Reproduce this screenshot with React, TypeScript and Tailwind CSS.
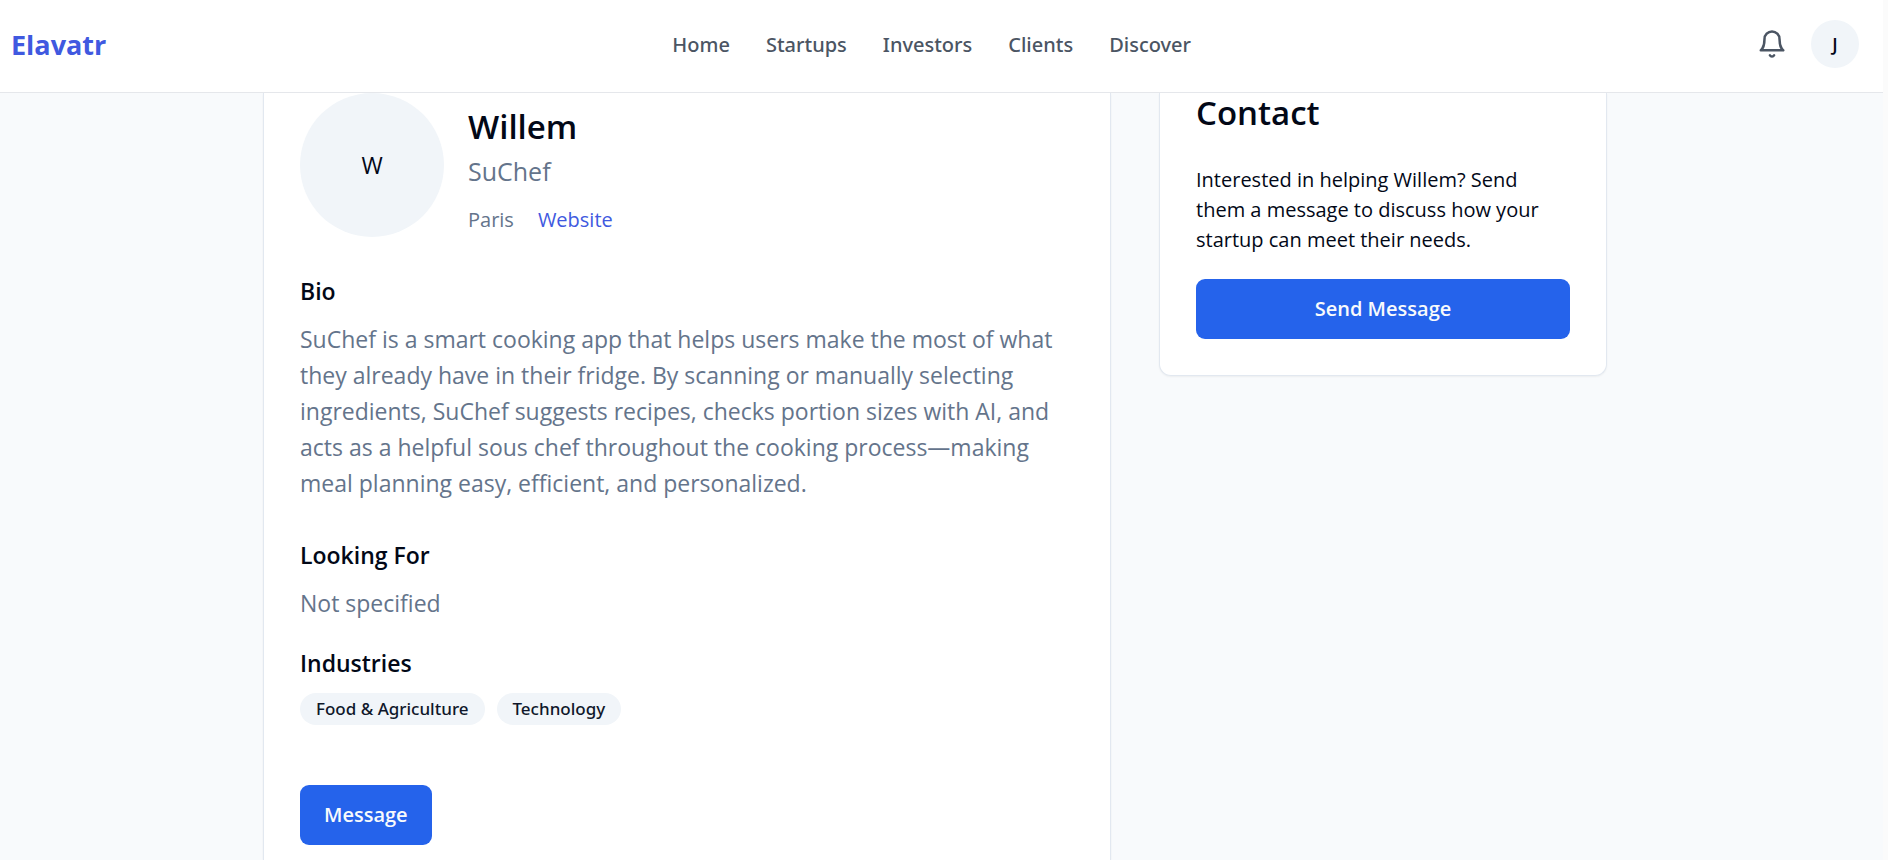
import React from 'react';

interface SectionProps {
    title: string;
    children: React.ReactNode;
    className?: string;
}

const navLinks = ['Home', 'Startups', 'Investors', 'Clients', 'Discover'];
const industries = ['Food & Agriculture', 'Technology'];

const BellIcon: React.FC = () => (
    <svg
        className="w-[30px] h-[30px]"
        viewBox="0 0 24 24"
        fill="none"
        stroke="currentColor"
        strokeWidth="2"
        strokeLinecap="round"
        strokeLinejoin="round"
        aria-hidden="true"
    >
        <path d="M6 8a6 6 0 0 1 12 0c0 7 3 9 3 9H3s3-2 3-9" />
        <path d="M10.3 21a1.94 1.94 0 0 0 3.4 0" />
    </svg>
);

const Header: React.FC = () => (
    <header className="flex items-center justify-between bg-white border-b border-[#e5e7eb] pl-[11px] pr-6 pt-5 pb-6">
        <a href="#" className="pt-0.5 text-[27px] leading-9 font-bold text-[#4059e0]">Elavatr</a>
        <nav className="flex gap-9 pt-0.5 font-['Noto_Sans',sans-serif]">
            {navLinks.map((link) => (
                <a key={link} href="#" className="text-[20px] leading-[30px] font-medium text-[#4b5563]">
                    {link}
                </a>
            ))}
        </nav>
        <div className="flex items-center gap-6">
            <button className="text-[#4b5563]" aria-label="Notifications">
                <BellIcon />
            </button>
            <button className="w-12 h-12 rounded-full bg-[#f1f5f9] text-[18px] font-semibold" aria-label="Account">
                J
            </button>
        </div>
    </header>
);

const Section: React.FC<SectionProps> = ({ title, children, className = '' }) => (
    <section className={className}>
        <h3 className="text-[23px] leading-9 font-semibold">{title}</h3>
        {children}
    </section>
);

const ProfileCard: React.FC = () => (
    <article className="flex-1 bg-white border-x border-[#e2e8f0] shadow-[0_1px_2px_rgba(0,0,0,0.05)] px-9 pb-3">
        <div className="flex items-start gap-6">
            <div className="w-36 h-36 shrink-0 rounded-full bg-[#f1f5f9] flex items-center justify-center text-[23px]">
                W
            </div>
            <div className="pt-4">
                <h1 className="text-[33px] leading-9 font-semibold">Willem</h1>
                <p className="mt-2 text-[25px] leading-9 text-[#64748b]">SuChef</p>
                <div className="mt-4 flex gap-6 text-[20px] leading-[30px]">
                    <span className="text-[#64748b]">Paris</span>
                    <a href="#" className="text-[#4059e0]">Website</a>
                </div>
            </div>
        </div>

        <Section title="Bio" className="mt-9">
            <p className="mt-3 text-[23px] leading-9 text-[#64748b]">
                SuChef is a smart cooking app that helps users make the most of what they already have in
                their fridge. By scanning or manually selecting ingredients, SuChef suggests recipes, checks
                portion sizes with AI, and acts as a helpful sous chef throughout the cooking
                process—making meal planning easy, efficient, and personalized.
            </p>
        </Section>

        <Section title="Looking For" className="mt-9">
            <p className="mt-3 text-[23px] leading-9 text-[#64748b]">Not specified</p>
        </Section>

        <Section title="Industries" className="mt-6">
            <div className="mt-3 flex gap-3 font-['Noto_Sans',sans-serif]">
                {industries.map((industry) => (
                    <span
                        key={industry}
                        className="rounded-full bg-[#f1f5f9] px-4 text-[17px] leading-8 font-medium text-[#0f172a]"
                    >
                        {industry}
                    </span>
                ))}
            </div>
        </Section>

        <button className="mt-[60px] h-[60px] px-6 rounded-[9px] bg-[#2563eb] text-[20px] font-semibold text-[#f8fafc]">
            Message
        </button>
    </article>
);

const ContactCard: React.FC = () => (
    <aside className="w-[448px] shrink-0 bg-white border-x border-b border-[#e2e8f0] rounded-b-xl shadow-[0_1px_2px_rgba(0,0,0,0.05)] px-9 pt-0.5 pb-9">
        <h2 className="text-[33px] leading-9 font-semibold">Contact</h2>
        <p className="mt-[34px] text-[20px] leading-[30px]">
            Interested in helping Willem? Send them a message to discuss how your startup can meet their needs.
        </p>
        <button className="mt-6 w-full h-[60px] rounded-[9px] bg-[#2563eb] text-[20px] font-semibold text-[#f8fafc]">
            Send Message
        </button>
    </aside>
);

const App: React.FC = () => {
    return (
        <div className="flex min-h-screen bg-[#f8fafc] font-['Open_Sans',sans-serif] text-[#020817]">
            <div className="flex flex-1 flex-col">
                <Header />
                <main className="flex flex-1 pr-[13px]">
                    <div className="mx-auto flex w-full max-w-[1344px] gap-12">
                        <ProfileCard />
                        <div className="shrink-0">
                            <ContactCard />
                        </div>
                    </div>
                </main>
            </div>
            {/* scrollbar gutter */}
            <div className="w-[5px] shrink-0 bg-[#fbfbfb]" />
        </div>
    );
};

export default App;
